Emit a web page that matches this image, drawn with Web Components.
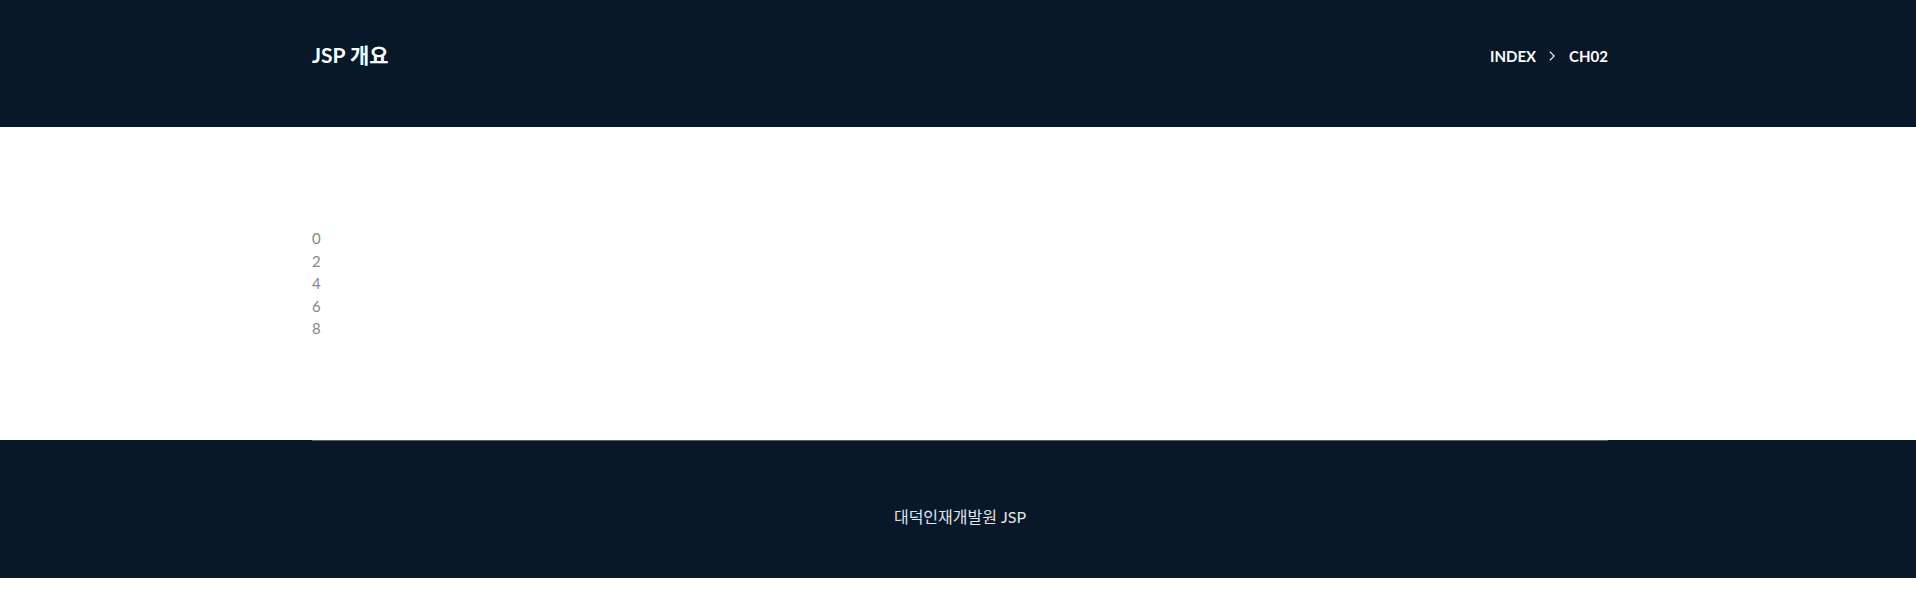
<!DOCTYPE html>
<html lang="ko">
<head>
<meta charset="utf-8">
<title>JSP 개요</title>
<style>
body{margin:0;background:#fff;color:#888;font:15px/1.5 Lato,"Noto Sans CJK KR",sans-serif;--navy:#081828}
</style>
</head>
<body>
<page-header>JSP 개요
  <crumb-trail slot="nav" parent="INDEX" current="CH02"></crumb-trail>
</page-header>
<number-list values="0,2,4,6,8"></number-list>
<page-footer>대덕인재개발원 JSP</page-footer>
<script>
const define = (name, html, setup) => customElements.define(name, class extends HTMLElement {
  connectedCallback() {
    if (this.shadowRoot) return;
    const root = this.attachShadow({mode: 'open'});
    root.innerHTML = html;
    if (setup) setup(this, root);
  }
});
const container = `.container{box-sizing:border-box;max-width:1320px;margin:0 auto;padding:0 12px}`;

define('crumb-trail', `<style>
:host{display:block}
ol{display:flex;align-items:center;list-style:none;margin:0;padding:0;font-size:15px;font-weight:700;line-height:24px}
li{display:flex;align-items:center}
a{color:inherit;text-decoration:none}
svg{width:6px;height:10px;margin:0 14px 0 13px;fill:none;stroke:#fff;stroke-width:1.2}
</style><nav aria-label="breadcrumb"><ol><li><a href="#"></a><svg viewBox="0 0 6 10" aria-hidden="true"><path d="M.8.6 5.2 5 .8 9.4"/></svg></li><li aria-current="page"></li></ol></nav>`,
(host, root) => {
  root.querySelector('a').textContent = host.getAttribute('parent');
  root.querySelector('[aria-current]').textContent = host.getAttribute('current');
});

define('page-header', `<style>${container}
:host{display:block;background:var(--navy);color:#fff;padding:40px 0 55px 4px}
.container{display:flex;align-items:center;justify-content:space-between}
h1{margin:0;font-size:21px;font-weight:700;line-height:30px;padding-bottom:2px}
</style><header class="container"><h1><slot></slot></h1><slot name="nav"></slot></header>`);

define('number-list', `<style>${container}
:host{display:block;padding-left:4px}
ul{list-style:none;margin:0;padding:100px 0}
</style><main class="container"><ul></ul></main>`,
(host, root) => {
  for (const value of host.getAttribute('values').split(',')) {
    const item = document.createElement('li');
    item.textContent = value;
    root.querySelector('ul').append(item);
  }
});

define('page-footer', `<style>${container}
:host{display:block;background:var(--navy);color:#e4e4e4;padding-left:4px}
.line{height:1px;background:#52605f}
p{margin:0;padding:64px 0 49px;text-align:center;font-size:16px}
</style><footer class="container"><div class="line"></div><p><slot></slot></p></footer>`);
</script>
</body>
</html>
